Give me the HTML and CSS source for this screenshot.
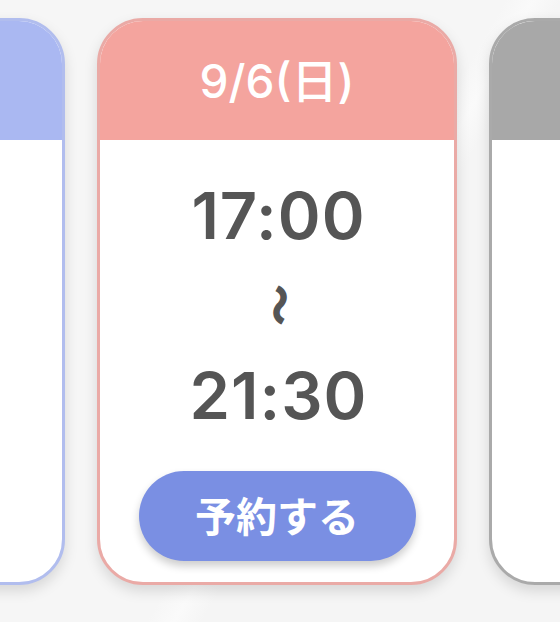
FILE: index.html
```html
<!DOCTYPE html>
<html lang="ja">
<head>
<meta charset="utf-8">
<title>予約</title>
<link rel="stylesheet" href="styles.css">
</head>
<body>
<div class="track">
  <div class="card card-blue">
    <div class="card-head"><span class="date">9/5(土)</span></div>
    <div class="card-body"></div>
  </div>
  <div class="card card-pink">
    <div class="card-head"><span class="date">9/6(日)</span></div>
    <div class="card-body">
      <div class="time">17:00</div>
      <div class="wave-row"><span class="wave">〜</span></div>
      <div class="time">21:30</div>
      <button class="reserve">予約する</button>
    </div>
  </div>
  <div class="card card-gray">
    <div class="card-head"><span class="date">9/7(月)</span></div>
    <div class="card-body"></div>
  </div>
</div>
</body>
</html>
```
FILE: styles.css
```css
html, body {
  margin: 0;
  padding: 0;
}
body {
  width: 560px;
  height: 622px;
  overflow: hidden;
  background: linear-gradient(120deg, #f6f6f6 0%, #f6f6f6 55%, #fafafa 58%, #f5f5f5 61%, #f5f5f5 100%);
  font-family: Inter, "Noto Sans CJK JP", sans-serif;
}
.track {
  display: flex;
  gap: 32px;
  margin-left: -295px;
  padding-top: 18px;
}
.card {
  flex: 0 0 360px;
  height: 567px;
  box-sizing: border-box;
  border: 3px solid #eaaaa6;
  border-radius: 46px;
  overflow: hidden;
  background: #fff;
  display: flex;
  flex-direction: column;
  box-shadow: 0 6px 14px rgba(0, 0, 0, 0.13);
}
.card-head {
  height: 119px;
  box-sizing: border-box;
  display: flex;
  align-items: center;
  justify-content: center;
  background: #f4a49e;
}
.date {
  color: #fff;
  font-size: 46px;
  font-weight: 500;
  line-height: 1;
}
.card-blue { border-color: #b1bdee; }
.card-blue .card-head { background: #aab8f2; }
.card-blue .date { visibility: hidden; }
.card-gray { border-color: #aaaaaa; }
.card-gray .card-head { background: #a8a8a8; }
.card-gray .date { visibility: hidden; }
.card-body {
  flex: 1;
  display: flex;
  flex-direction: column;
  align-items: center;
  padding-top: 44px;
}
.time {
  color: #555;
  font-size: 65px;
  font-weight: 600;
  line-height: 64px;
  letter-spacing: 1px;
  padding-left: 3px;
}
.wave-row {
  height: 116px;
  display: flex;
  align-items: center;
  justify-content: center;
  box-sizing: border-box;
  padding-left: 10px;
  padding-bottom: 2px;
}
.wave {
  display: inline-block;
  color: #555;
  font-family: "Noto Sans CJK JP", sans-serif;
  font-size: 40px;
  font-weight: 700;
  line-height: 1;
  -webkit-text-stroke: 1.5px #555;
  transform: rotate(90deg);
}
.reserve {
  margin-top: 43px;
  width: 277px;
  height: 90px;
  border: none;
  border-radius: 45px;
  background: #7a8fe3;
  color: #fff;
  font-family: "Noto Sans CJK JP", sans-serif;
  font-size: 41px;
  font-weight: 700;
  line-height: 1;
  padding: 0 0 4px 0;
  box-shadow: 0 5px 8px rgba(0, 0, 0, 0.2);
}
```
